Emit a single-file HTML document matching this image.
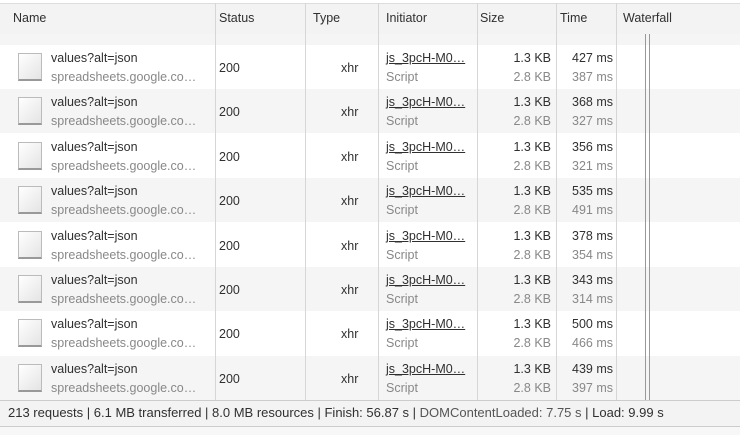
<!DOCTYPE html><html><head><style>
body{margin:0;width:740px;height:435px;overflow:hidden;background:#fff;font-family:"Liberation Sans",sans-serif;font-size:12.5px;color:#303030;position:relative}
.a{position:absolute}
.hdr{left:0;top:3px;width:740px;height:30px;background:#f3f3f3;border-bottom:1px solid #ccc;border-top:1px solid #ddd}
.vl{position:absolute;top:3px;width:1px;background:#d6d6d6;height:397px}
.row{position:absolute;left:0;width:740px;height:44px}
.g{background:#f5f5f5}
.ic{position:absolute;left:18px;top:8px;width:24px;height:28px;border:1px solid #bbb;border-bottom:2px solid #999;background:linear-gradient(135deg,#fff,#e4e4e4);box-sizing:border-box}
.t{position:absolute;white-space:nowrap}
.s{color:#888}
.u{text-decoration:underline}
.r{text-align:right}
</style></head><body>
<div class="a hdr"></div>
<div class="t" style="left:13px;top:11px">Name</div>
<div class="t" style="left:219px;top:11px">Status</div>
<div class="t" style="left:313px;top:11px">Type</div>
<div class="t" style="left:386px;top:11px">Initiator</div>
<div class="t" style="left:480px;top:11px">Size</div>
<div class="t" style="left:560px;top:11px">Time</div>
<div class="t" style="left:623px;top:11px">Waterfall</div>
<div class="row g" style="top:34px;height:11px"></div>
<div id="rows"></div>
<script>
var d=[["427","387"],["368","327"],["356","321"],["535","491"],["378","354"],["343","314"],["500","466"],["439","397"]];
var h="";
d.forEach(function(v,i){var y=45+i*44.4;
h+='<div class="row'+(i%2?' g':'')+'" style="top:'+y+'px"><div class="ic"></div>'+
'<div class="t" style="left:51px;top:6px">values?alt=json</div><div class="t s" style="left:51px;top:25px">spreadsheets.google.co…</div>'+
'<div class="t" style="left:219px;top:16px">200</div><div class="t" style="left:341px;top:16px">xhr</div>'+
'<div class="t u" style="left:386px;top:6px">js_3pcH-M0…</div><div class="t s" style="left:386px;top:25px">Script</div>'+
'<div class="t r" style="right:189px;top:6px">1.3 KB</div><div class="t r s" style="right:189px;top:25px">2.8 KB</div>'+
'<div class="t r" style="right:127px;top:6px">'+v[0]+' ms</div><div class="t r s" style="right:127px;top:25px">'+v[1]+' ms</div></div>';});
document.getElementById('rows').innerHTML=h;
</script>
<div class="vl" style="left:215px"></div><div class="vl" style="left:305px"></div><div class="vl" style="left:378px"></div><div class="vl" style="left:477px"></div><div class="vl" style="left:556px"></div><div class="vl" style="left:616px"></div>
<div class="a" style="left:645px;top:34px;width:1px;height:366px;background:#999"></div>
<div class="a" style="left:649px;top:34px;width:1px;height:366px;background:#999"></div>
<div class="a" style="left:0;top:400px;width:740px;height:25px;background:#f3f3f3;border-top:1px solid #ccc;border-bottom:1px solid #ccc"></div>
<div class="t" style="left:8px;top:405px;font-size:13px">213 requests | 6.1 MB transferred | 8.0 MB resources | Finish: 56.87 s | <span style="color:#555">DOMContentLoaded: 7.75 s</span> | Load: 9.99 s</div>
<div class="a" style="left:0;top:427px;width:740px;height:8px;background:#f7f7f7"></div>
</body></html>
